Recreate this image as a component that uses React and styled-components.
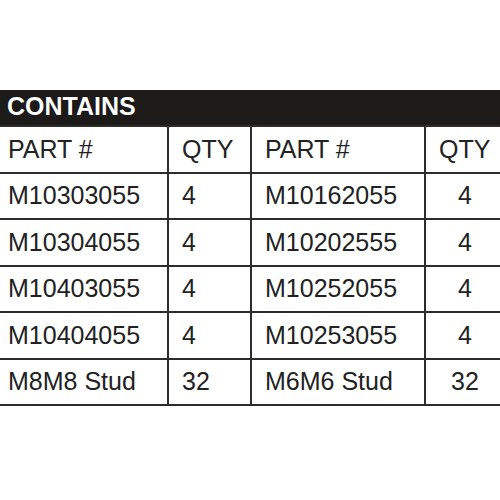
import styled, { createGlobalStyle } from 'styled-components';

const GlobalStyle = createGlobalStyle`
  body {
    margin: 0;
    background: #ffffff;
    font-family: 'Liberation Sans', Arial, sans-serif;
  }
`;

const Page = styled.div`
  width: 500px;
  height: 500px;
  overflow: hidden;
  padding-top: 90px;
  box-sizing: border-box;
`;

const TitleBar = styled.div`
  height: 36px;
  background: #1d1a1a;
  color: #ffffff;
  font-size: 25px;
  font-weight: bold;
  line-height: 32px;
  padding-left: 7px;
  text-shadow: 0 0 1px #000;
`;

const Table = styled.table`
  border-collapse: collapse;
  table-layout: fixed;
  width: 516px;
  margin-left: -6px;
  margin-top: -1px;
`;

const Cell = styled.td`
  border: 2px solid #2c2c2c;
  height: 44.5px;
  padding: 0 0 0 ${({ $first }) => ($first ? '12px' : '13px')};
  font-size: 25px;
  color: #222222;
  text-align: ${({ $center }) => ($center ? 'center' : 'left')};
  ${({ $center }) => $center && 'padding: 0 6px 0 0;'}
  vertical-align: middle;
  white-space: nowrap;
`;

const rows = [
  ['M10303055', '4', 'M10162055', '4'],
  ['M10304055', '4', 'M10202555', '4'],
  ['M10403055', '4', 'M10252055', '4'],
  ['M10404055', '4', 'M10253055', '4'],
  ['M8M8 Stud', '32', 'M6M6 Stud', '32'],
];

const App = () => {
  return (
    <Page>
      <GlobalStyle />
      <TitleBar>CONTAINS</TitleBar>
      <Table>
        <colgroup>
          <col style={{ width: 173 }} />
          <col style={{ width: 83 }} />
          <col style={{ width: 174 }} />
          <col style={{ width: 86 }} />
        </colgroup>
        <tbody>
          <tr>
            <Cell $first>PART #</Cell>
            <Cell>QTY</Cell>
            <Cell>PART #</Cell>
            <Cell>QTY</Cell>
          </tr>
          {rows.map((row, index) => (
            <tr key={index}>
              <Cell $first>{row[0]}</Cell>
              <Cell>{row[1]}</Cell>
              <Cell>{row[2]}</Cell>
              <Cell $center>{row[3]}</Cell>
            </tr>
          ))}
        </tbody>
      </Table>
    </Page>
  );
};

export default App;
